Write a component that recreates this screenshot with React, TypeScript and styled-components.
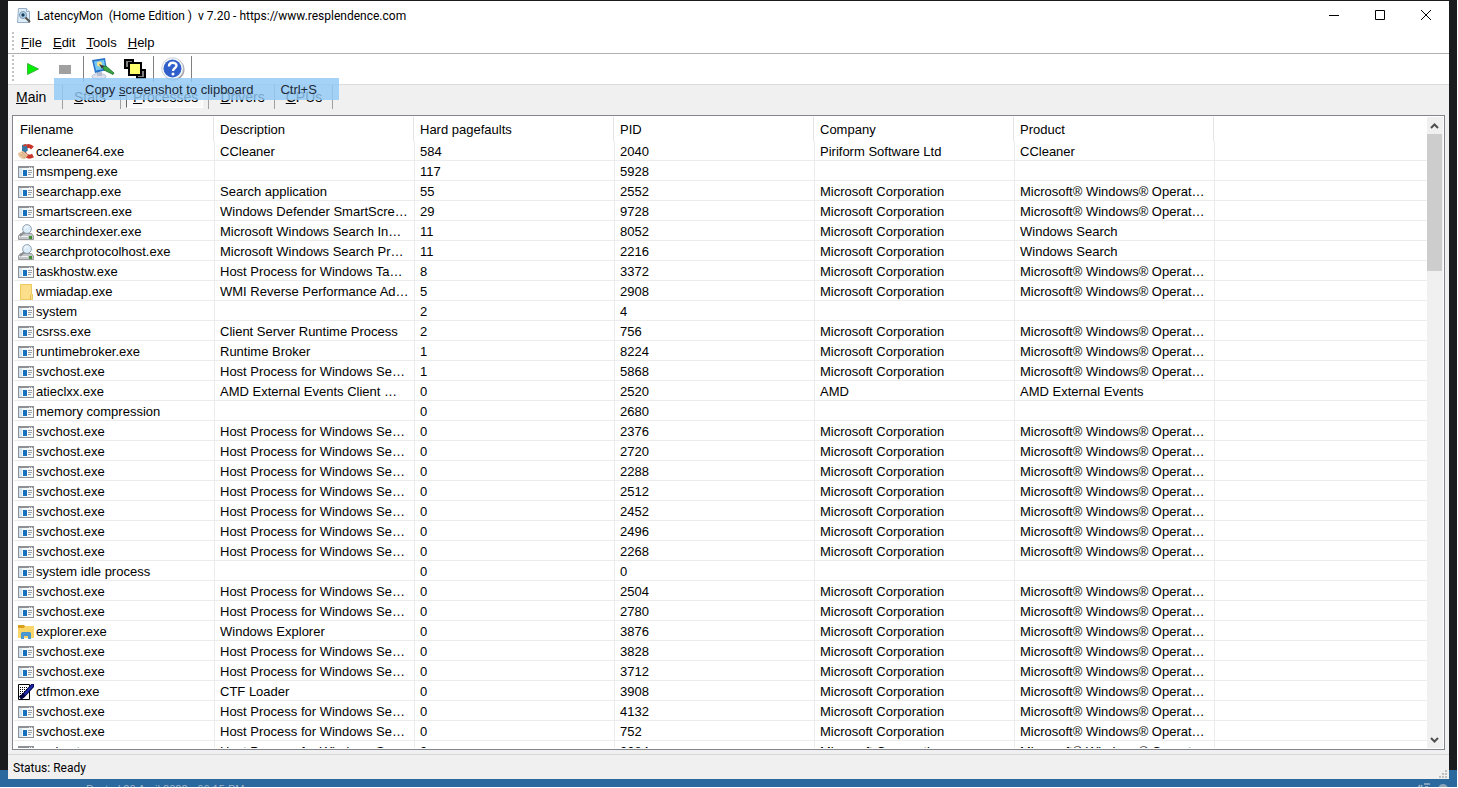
import React, { useState } from 'react';
import styled, { createGlobalStyle, css } from 'styled-components';

const GlobalStyle = createGlobalStyle`
  * { box-sizing: border-box; }
  html, body, #root { height: 100%; margin: 0; }
  body {
    font-family: 'Liberation Sans', Arial, sans-serif;
    font-size: 13px;
    line-height: 16px;
    color: #000;
  }
  button { font: inherit; color: inherit; border: 0; padding: 0; background: none; }
`;

const Desktop = styled.div`
  position: relative;
  display: flex;
  flex-direction: column;
  height: 100%;
  min-height: 320px;
  overflow: hidden;
  background: #1a1c1e linear-gradient(#2a689e, #2a689e) bottom / 100% 17px no-repeat;
  border-right: 1px solid #fff;
  border-bottom: 1px solid #fff;
`;

const Window = styled.main`
  display: flex;
  flex-direction: column;
  flex: 1;
  min-height: 0;
  margin: 1px 8px 0;
  background: #fff;
`;

const TitleBar = styled.header`
  display: flex;
  align-items: center;
  flex: none;
  height: 30px;
  padding-left: 8px;
  font-family: Roboto, 'Open Sans', sans-serif;
  font-size: 12px;
`;

const Title = styled.h1`
  flex: 1;
  margin: 0;
  padding-left: 5px;
  font-size: 12px;
  font-weight: 400;
  white-space: pre;
`;

const CaptionButton = styled.button`
  display: grid;
  place-items: center;
  width: 46px;
  height: 30px;
  padding-bottom: 2px;
`;

const grip = css`
  &::before {
    content: '';
    align-self: stretch;
    width: 2px;
    margin: 1px 0 1px 4px;
    background: repeating-linear-gradient(#c4c4c4 0 2px, #fff 2px 4px);
  }
`;

const MenuBar = styled.nav`
  ${grip}
  display: flex;
  align-items: center;
  flex: none;
  height: 23px;
  border-bottom: 1px solid #b0b0b0;
`;

const MenuItem = styled.button`
  height: 22px;
  margin-left: 11px;
  padding-top: 2px;
  &:first-of-type { margin-left: 7px; }
  &::first-letter { text-decoration: underline; }
`;

const ToolBar = styled.div`
  ${grip}
  display: flex;
  align-items: center;
  flex: none;
  height: 31px;
  border-bottom: 1px solid #dcdcdc;
`;

const ToolButton = styled.button`
  display: grid;
  place-items: center;
  width: 32px;
  height: 30px;
  &:first-of-type { margin-left: 3px; }
`;

const ToolSeparator = styled.span`
  width: 1px;
  height: 26px;
  margin: 0 3px 0 2px;
  background: #808080;
`;

const Body = styled.div`
  display: flex;
  flex-direction: column;
  flex: 1;
  min-height: 0;
  background: #f0f0f0;
`;

const Tabs = styled.div`
  display: flex;
  align-items: center;
  flex: none;
  height: 30px;
  padding: 0 2px 6px;
  font-size: 14px;
`;

const Tab = styled.button<{ $active: boolean }>`
  height: 22px;
  min-width: 47px;
  padding: 0 4px 0 6px;
  line-height: 20px;
  text-align: left;
  &::first-letter { text-decoration: underline; }
  ${p => p.$active && css`
    background: #f8f8f8;
    border-left: 1px solid #696969;
    border-right: 1px solid #fff;
    border-bottom: 1px solid #fff;
  `}
`;

const TabSeparator = styled.span`
  width: 1px;
  height: 24px;
  margin: 0 5px;
  background: #a0a0a0;
`;

const ListFrame = styled.section`
  display: flex;
  flex: 1;
  min-height: 0;
  margin: 0 4px 4px;
  padding: 1px;
  border: 1px solid #82868c;
  background: #fff;
`;

const ListView = styled.div`
  flex: 1;
  min-width: 0;
  overflow: hidden;
`;

const Table = styled.table`
  width: 100%;
  table-layout: fixed;
  border-collapse: separate;
  border-spacing: 0;
`;

const HeadCell = styled.th`
  height: 24px;
  padding: 2px 6px 0;
  font-weight: 400;
  text-align: left;
  border-right: 1px solid #e4e4e4;
  &:last-child { border-right: 0; }
`;

const Cell = styled.td`
  height: 20px;
  padding: 2px 0 0 5px;
  border-left: 1px solid #ececec;
  border-bottom: 1px solid #ececec;
  white-space: nowrap;
  &:first-child { padding-left: 4px; border-left: 0; }
`;

const FileName = styled.span`
  display: flex;
  align-items: center;
  gap: 2px;
`;

const ScrollBar = styled.div`
  display: flex;
  flex-direction: column;
  flex: none;
  width: 16px;
  background: #f0f0f0;
`;

const ScrollButton = styled.button`
  display: grid;
  place-items: center;
  flex: none;
  height: 17px;
  padding-right: 1px;
`;

const Track = styled.div`
  flex: 1;
`;

const Thumb = styled.div`
  height: 23%;
  margin-right: 1px;
  background: #cdcdcd;
`;

const StatusBar = styled.footer`
  display: flex;
  align-items: center;
  justify-content: space-between;
  flex: none;
  height: 25px;
  padding: 2px 2px 0 5px;
  border-top: 1px solid #d7d7d7;
  font-family: Roboto, 'Open Sans', sans-serif;
  font-size: 12px;
`;

const GripCorner = styled.span`
  display: flex;
  align-self: flex-end;
  padding-bottom: 1px;
`;

const Taskbar = styled.div`
  display: flex;
  justify-content: space-between;
  flex: none;
  height: 8px;
  overflow: hidden;
  padding: 4px 8px 0 86px;
  font-size: 11px;
  line-height: 12px;
  color: #9fb4c6;
`;

const MenuPopup = styled.button`
  position: absolute;
  top: 78px;
  left: 54px;
  display: flex;
  align-items: center;
  gap: 27px;
  width: 285px;
  height: 22px;
  padding: 2px 0 0 31px;
  background: rgba(145, 201, 247, 0.82);
  color: #1e2a36;
`;

const AppIcon = () => (
  <svg width="16" height="16" viewBox="0 0 16 16">
    <path d="M2.500 .5h8l3 3v11h-12z" fill="#dfecf7" stroke="#93aec6" />
    <path d="M10.500 .5v3h3" fill="#fff" stroke="#93aec6" />
    <circle cx="7" cy="7" r="3.500" fill="#b9d8f0" stroke="#7896b3" />
    <circle cx="7" cy="7" r="1.700" fill="#1d3a56" />
    <path d="M9.500 9.500l4.500 4.500" stroke="#54504c" strokeWidth="2" />
  </svg>
);

const ProgramIcon = () => (
  <svg width="16" height="16" viewBox="0 0 16 16" shapeRendering="crispEdges">
    <path d="M0 2h16v12H0z" fill="#8d9195" />
    <path d="M1 4h14v9H1z" fill="#f6f7f8" />
    <path d="M1 4h3v9H1z" fill="#d5e5f1" />
    <path d="M11 3h1v1h-1zM13 3h1v1h-1z" fill="#e8e8e8" />
    <path d="M5 6h4v6H5z" fill="#1670bd" />
    <path d="M10 6h4v1h-4zM10 8h4v1h-4zM10 10h3v1h-3z" fill="#9a9fa4" />
  </svg>
);

const CleanerIcon = () => (
  <svg width="16" height="16" viewBox="0 0 16 16">
    <path d="M14.500 4C11 .5 6 2 6 7s4.500 7 9 4.500" fill="none" stroke="#c8362b" strokeWidth="4" />
    <path d="M4 1l4-1 2 6-3 3-3-2z" fill="#3878a8" />
    <path d="M5 1l3-1 .5 2-3 .5z" fill="#d5412f" />
    <path d="M0 9l5-2 5 4-3 4c-4 0-7-2-7-6z" fill="#e9c7a0" />
    <path d="M2 10l5 4M4 8l4 5" stroke="#c99a6b" strokeWidth=".7" />
  </svg>
);

const SearchIcon = () => (
  <svg width="16" height="16" viewBox="0 0 16 16">
    <path d="M2.500 9.500h11l2 2.500v3.500H.5V12z" fill="#c3c6c9" stroke="#85888b" strokeWidth=".8" />
    <path d="M1 12.500h9" stroke="#f2f2f2" />
    <path d="M11 12h3v3h-3z" fill="#3f8f35" />
    <path d="M6 8l-4 4" stroke="#8d8f92" strokeWidth="2" />
    <circle cx="9" cy="5" r="4.400" fill="#dcecf8" stroke="#94a3b2" />
    <path d="M6.500 4.500C7 3 8.500 2.500 10 2.800" fill="none" stroke="#fff" />
  </svg>
);

const FolderIcon = () => (
  <svg width="16" height="16" viewBox="0 0 16 16">
    <path d="M2 0h12v10h1v6H2z" fill="#fbdf8a" />
    <path d="M2.500 .5h11v10h1v5h-12z" fill="none" stroke="#ecc860" />
    <path d="M12.500 11v4" stroke="#e3b949" />
  </svg>
);

const ExplorerIcon = () => (
  <svg width="16" height="16" viewBox="0 0 16 16">
    <path d="M0 2h16v12H0z" fill="#fad568" />
    <path d="M0 1h6l1 1-1 2H0z" fill="#d8a01d" />
    <path d="M3 15V9l1-1h8l1 1v6h-3v-3H6v3z" fill="#4a98cf" />
  </svg>
);

const PenIcon = () => (
  <svg width="16" height="16" viewBox="0 0 16 16">
    <path d="M.5 .5h11v15H.5z" fill="#fff" stroke="#000" />
    <path d="M2 3.500h8M2 5.500h8M2 7.500h6M2 9.500h4M2 11.500h2" stroke="#000" strokeDasharray="1 1" />
    <path d="M16 0L5 12l-3 2" fill="none" stroke="#000040" strokeWidth="4" />
    <path d="M15 1L6.500 10.500" stroke="#1c2bb0" strokeWidth="2" />
  </svg>
);

const ScreenshotIcon = () => (
  <svg width="24" height="22" viewBox="0 0 24 22">
    <ellipse cx="8" cy="18.500" rx="7" ry="3" fill="#dfe1ec" stroke="#a5abc0" strokeWidth=".7" />
    <path d="M6 14h5v4H6z" fill="#b7bfd2" />
    <path d="M1 2l13-2 2 12-12 3z" fill="#2874c8" />
    <path d="M3 3.500l10-1.500 1.500 8.500-9.500 2z" fill="#77c9f5" />
    <circle cx="8.500" cy="6" r="2.500" fill="#f4e48c" />
    <path d="M11 8l4 0 8 7-1 1.500-9-4.500z" fill="#3aa545" stroke="#1b6b28" strokeWidth=".8" />
    <path d="M8 6l5 2-2 3z" fill="#3a3a3a" />
  </svg>
);

const WindowsIcon = () => (
  <svg width="22" height="20" viewBox="0 0 22 20" shapeRendering="crispEdges">
    <path d="M1 1h8v8H1zM13 11h8v8h-8z" fill="#808080" stroke="#000" strokeWidth="2" />
    <path d="M5 4h12v12H5z" fill="#ffff6e" stroke="#000" strokeWidth="2" />
  </svg>
);

const HelpIcon = () => (
  <svg width="24" height="24" viewBox="0 0 24 24">
    <circle cx="12.500" cy="12.500" r="11" fill="#a6a6a6" />
    <circle cx="11.500" cy="11.500" r="10.800" fill="#f4f6fa" stroke="#b5bac4" strokeWidth=".6" />
    <circle cx="11.500" cy="11.500" r="9" fill="#2f5fca" />
    <path d="M8 9.500c0-5 7.500-4.500 7.500-1 0 2.500-3.500 2.500-3.500 5.500" fill="none" stroke="#fff" strokeWidth="2.400" />
    <circle cx="12" cy="17" r="1.500" fill="#fff" />
  </svg>
);

const Chevron = ({ down = false }: { down?: boolean }) => (
  <svg width="9" height="6" viewBox="0 0 9 6">
    <path d={down ? 'M1 1l3.500 3.500L8 1' : 'M1 5l3.500-3.500L8 5'} fill="none" stroke="#505050" strokeWidth="2" />
  </svg>
);

const SizeGrip = () => (
  <svg width="8" height="8" viewBox="0 0 8 8" shapeRendering="crispEdges">
    <path d="M6 0h2v2H6zM3 3h2v2H3zM6 3h2v2H6zM0 6h2v2H0zM3 6h2v2H3zM6 6h2v2H6z" fill="#bfbfbf" />
  </svg>
);

const TrayIcons = () => (
  <svg width="36" height="12" viewBox="0 0 36 12">
    <path d="M5 5l2-3M8 5l1-3M11 1h6M12 4h3" stroke="#9fb4c6" strokeWidth="1.500" />
    <circle cx="30" cy="6" r="5" fill="#8aa4b8" />
  </svg>
);

const icons = {
  program: ProgramIcon,
  cleaner: CleanerIcon,
  search: SearchIcon,
  folder: FolderIcon,
  explorer: ExplorerIcon,
  pen: PenIcon,
};

type Row = {
  file: string;
  description: string;
  faults: number;
  pid: number;
  company: string;
  product: string;
  icon: keyof typeof icons;
};

const MS = 'Microsoft Corporation';
const WIN = 'Microsoft® Windows® Operat…';

const row = (
  file: string, description: string, faults: number, pid: number,
  company = MS, product = WIN, icon: Row['icon'] = 'program',
): Row => ({ file, description, faults, pid, company, product, icon });

const svchost = (pid: number, faults = 0) =>
  row('svchost.exe', 'Host Process for Windows Se…', faults, pid);

const rows: Row[] = [
  row('ccleaner64.exe', 'CCleaner', 584, 2040, 'Piriform Software Ltd', 'CCleaner', 'cleaner'),
  row('msmpeng.exe', '', 117, 5928, '', ''),
  row('searchapp.exe', 'Search application', 55, 2552),
  row('smartscreen.exe', 'Windows Defender SmartScre…', 29, 9728),
  row('searchindexer.exe', 'Microsoft Windows Search In…', 11, 8052, MS, 'Windows Search', 'search'),
  row('searchprotocolhost.exe', 'Microsoft Windows Search Pr…', 11, 2216, MS, 'Windows Search', 'search'),
  row('taskhostw.exe', 'Host Process for Windows Ta…', 8, 3372),
  row('wmiadap.exe', 'WMI Reverse Performance Ad…', 5, 2908, MS, WIN, 'folder'),
  row('system', '', 2, 4, '', ''),
  row('csrss.exe', 'Client Server Runtime Process', 2, 756),
  row('runtimebroker.exe', 'Runtime Broker', 1, 8224),
  svchost(5868, 1),
  row('atieclxx.exe', 'AMD External Events Client …', 0, 2520, 'AMD', 'AMD External Events'),
  row('memory compression', '', 0, 2680, '', ''),
  ...[2376, 2720, 2288, 2512, 2452, 2496, 2268].map(pid => svchost(pid)),
  row('system idle process', '', 0, 0, '', ''),
  svchost(2504),
  svchost(2780),
  row('explorer.exe', 'Windows Explorer', 0, 3876, MS, WIN, 'explorer'),
  svchost(3828),
  svchost(3712),
  row('ctfmon.exe', 'CTF Loader', 0, 3908, MS, WIN, 'pen'),
  svchost(4132),
  svchost(752),
  svchost(2084),
];

const columns = ['Filename', 'Description', 'Hard pagefaults', 'PID', 'Company', 'Product'];
const tabs = ['Main', 'Stats', 'Processes', 'Drivers', 'CPUs'];

export default function App() {
  const [active, setActive] = useState('Processes');
  return (
    <Desktop>
      <GlobalStyle />
      <Window>
        <TitleBar>
          <AppIcon />
          <Title>{'LatencyMon  (Home Edition )  v 7.20 - https://www.resplendence.com'}</Title>
          <CaptionButton aria-label="Minimize">
            <svg width="10" height="10"><path d="M0 5.500h10" stroke="#000" /></svg>
          </CaptionButton>
          <CaptionButton aria-label="Maximize">
            <svg width="10" height="10"><path d="M.5 .5h9v9h-9z" fill="none" stroke="#000" /></svg>
          </CaptionButton>
          <CaptionButton aria-label="Close">
            <svg width="10" height="10"><path d="M0 0l10 10M10 0L0 10" stroke="#000" /></svg>
          </CaptionButton>
        </TitleBar>
        <MenuBar aria-label="Menu">
          {['File', 'Edit', 'Tools', 'Help'].map(name => <MenuItem key={name}>{name}</MenuItem>)}
        </MenuBar>
        <ToolBar>
          <ToolButton aria-label="Start">
            <svg width="12" height="12"><path d="M.5 .5v11l11-5.500z" fill="#00f000" stroke="#3fb53f" /></svg>
          </ToolButton>
          <ToolButton aria-label="Stop">
            <svg width="12" height="9"><path d="M0 0h12v9H0z" fill="#a0a0a0" /></svg>
          </ToolButton>
          <ToolSeparator />
          <ToolButton aria-label="Screenshot"><ScreenshotIcon /></ToolButton>
          <ToolButton aria-label="Windows"><WindowsIcon /></ToolButton>
          <ToolSeparator />
          <ToolButton aria-label="Help"><HelpIcon /></ToolButton>
          <ToolSeparator />
        </ToolBar>
        <Body>
          <Tabs role="tablist">
            {tabs.map(name => (
              <React.Fragment key={name}>
                <Tab role="tab" $active={name === active} aria-selected={name === active} onClick={() => setActive(name)}>
                  {name}
                </Tab>
                <TabSeparator />
              </React.Fragment>
            ))}
          </Tabs>
          <ListFrame>
            <ListView>
              <Table>
                <colgroup>
                  {columns.map(name => <col key={name} width="200" />)}
                  <col />
                </colgroup>
                <thead>
                  <tr>
                    {columns.map(name => <HeadCell key={name} scope="col">{name}</HeadCell>)}
                    <HeadCell aria-hidden="true" />
                  </tr>
                </thead>
                <tbody>
                  {rows.map(r => {
                    const Icon = icons[r.icon];
                    return (
                      <tr key={`${r.file}${r.pid}`}>
                        <Cell><FileName><Icon />{r.file}</FileName></Cell>
                        <Cell>{r.description}</Cell>
                        <Cell>{r.faults}</Cell>
                        <Cell>{r.pid}</Cell>
                        <Cell>{r.company}</Cell>
                        <Cell>{r.product}</Cell>
                        <Cell />
                      </tr>
                    );
                  })}
                </tbody>
              </Table>
            </ListView>
            <ScrollBar>
              <ScrollButton aria-label="Scroll up"><Chevron /></ScrollButton>
              <Track><Thumb /></Track>
              <ScrollButton aria-label="Scroll down"><Chevron down /></ScrollButton>
            </ScrollBar>
          </ListFrame>
          <StatusBar>
            <span>Status: Ready</span>
            <GripCorner><SizeGrip /></GripCorner>
          </StatusBar>
        </Body>
      </Window>
      <Taskbar>
        <span>Posted 20 April 2022 - 06:15 PM</span>
        <TrayIcons />
      </Taskbar>
      <MenuPopup>
        <span>Copy <u>s</u>creenshot to clipboard</span>
        <span>Ctrl+S</span>
      </MenuPopup>
    </Desktop>
  );
}
